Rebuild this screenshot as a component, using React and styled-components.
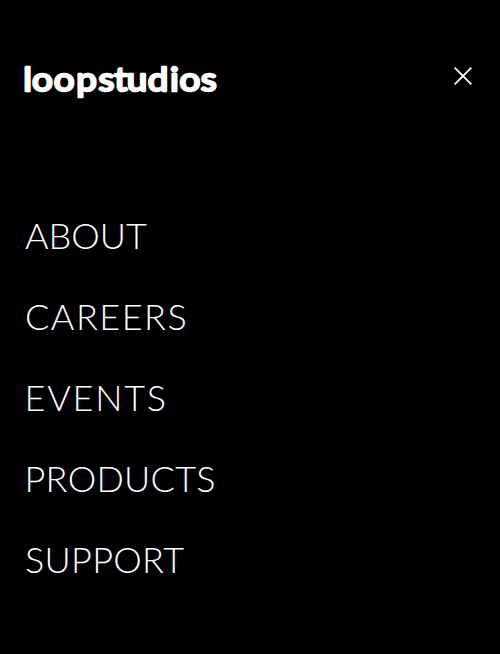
import React from "react";
import styled, { createGlobalStyle } from "styled-components";

const GlobalStyle = createGlobalStyle`
  * { box-sizing: border-box; }
  body { margin: 0; background: #000; }
`;

const Menu = styled.main`
  display: flex;
  flex-direction: column;
  min-height: 654px;
  padding: 60px 24px 0;
  background: #000;
  color: #fff;
  overflow: hidden;
`;

const Header = styled.header`
  display: flex;
  justify-content: space-between;
  align-items: flex-start;
  height: 40px;
`;

const Logo = styled.svg`
  display: block;
  width: 196px;
  height: 42px;
  overflow: visible;
`;

const Wordmark = styled.text`
  font-family: Lato, sans-serif;
  font-size: 33px;
  font-weight: 400;
  fill: #fff;
  stroke: #fff;
  stroke-width: 2.5px;
  stroke-linejoin: round;
`;

const CloseButton = styled.button`
  display: flex;
  margin: 7px 4px 0 0;
  padding: 0;
  border: 0;
  background: none;
  color: #fff;
  cursor: pointer;
`;

const Links = styled.nav`
  display: flex;
  flex-direction: column;
  align-items: flex-start;
  margin-top: 95px;
`;

const MenuLink = styled.a`
  height: 81px;
  margin-left: ${({ $offset }) => $offset}px;
  color: #fff;
  font-family: Lato, sans-serif;
  font-size: 36px;
  font-weight: 300;
  line-height: 81px;
  letter-spacing: ${({ $tracking }) => $tracking}px;
  text-decoration: none;
  text-transform: uppercase;
  white-space: nowrap;
`;

const items = [
  { label: "About", tracking: 0, offset: 1 },
  { label: "Careers", tracking: 1.5, offset: 1 },
  { label: "Events", tracking: 1.8, offset: 0.5 },
  { label: "Products", tracking: 0.3, offset: 0.5 },
  { label: "Support", tracking: 0.3, offset: 1 },
];

export default function App() {
  return (
    <>
      <GlobalStyle />
      <Menu>
        <Header>
          <Logo viewBox="0 0 196 42" role="img" aria-label="loopstudios">
            <Wordmark transform="scale(1.11 1)" x="-0.7 7.2 26.9 47.1 67.1 81.3 92.5 111.4 131.6 140 159.2" y="31">loopstudios</Wordmark>
          </Logo>
          <CloseButton aria-label="Close menu">
            <svg width="18" height="18" viewBox="0 0 18 18" fill="none" stroke="currentColor" strokeWidth="1.8">
              <path d="M.6.6l16.8 16.8M17.4.6L.6 17.4" />
            </svg>
          </CloseButton>
        </Header>
        <Links>
          {items.map(({ label, tracking, offset }) => (
            <MenuLink key={label} href="#" $tracking={tracking} $offset={offset}>{label}</MenuLink>
          ))}
        </Links>
      </Menu>
    </>
  );
}
